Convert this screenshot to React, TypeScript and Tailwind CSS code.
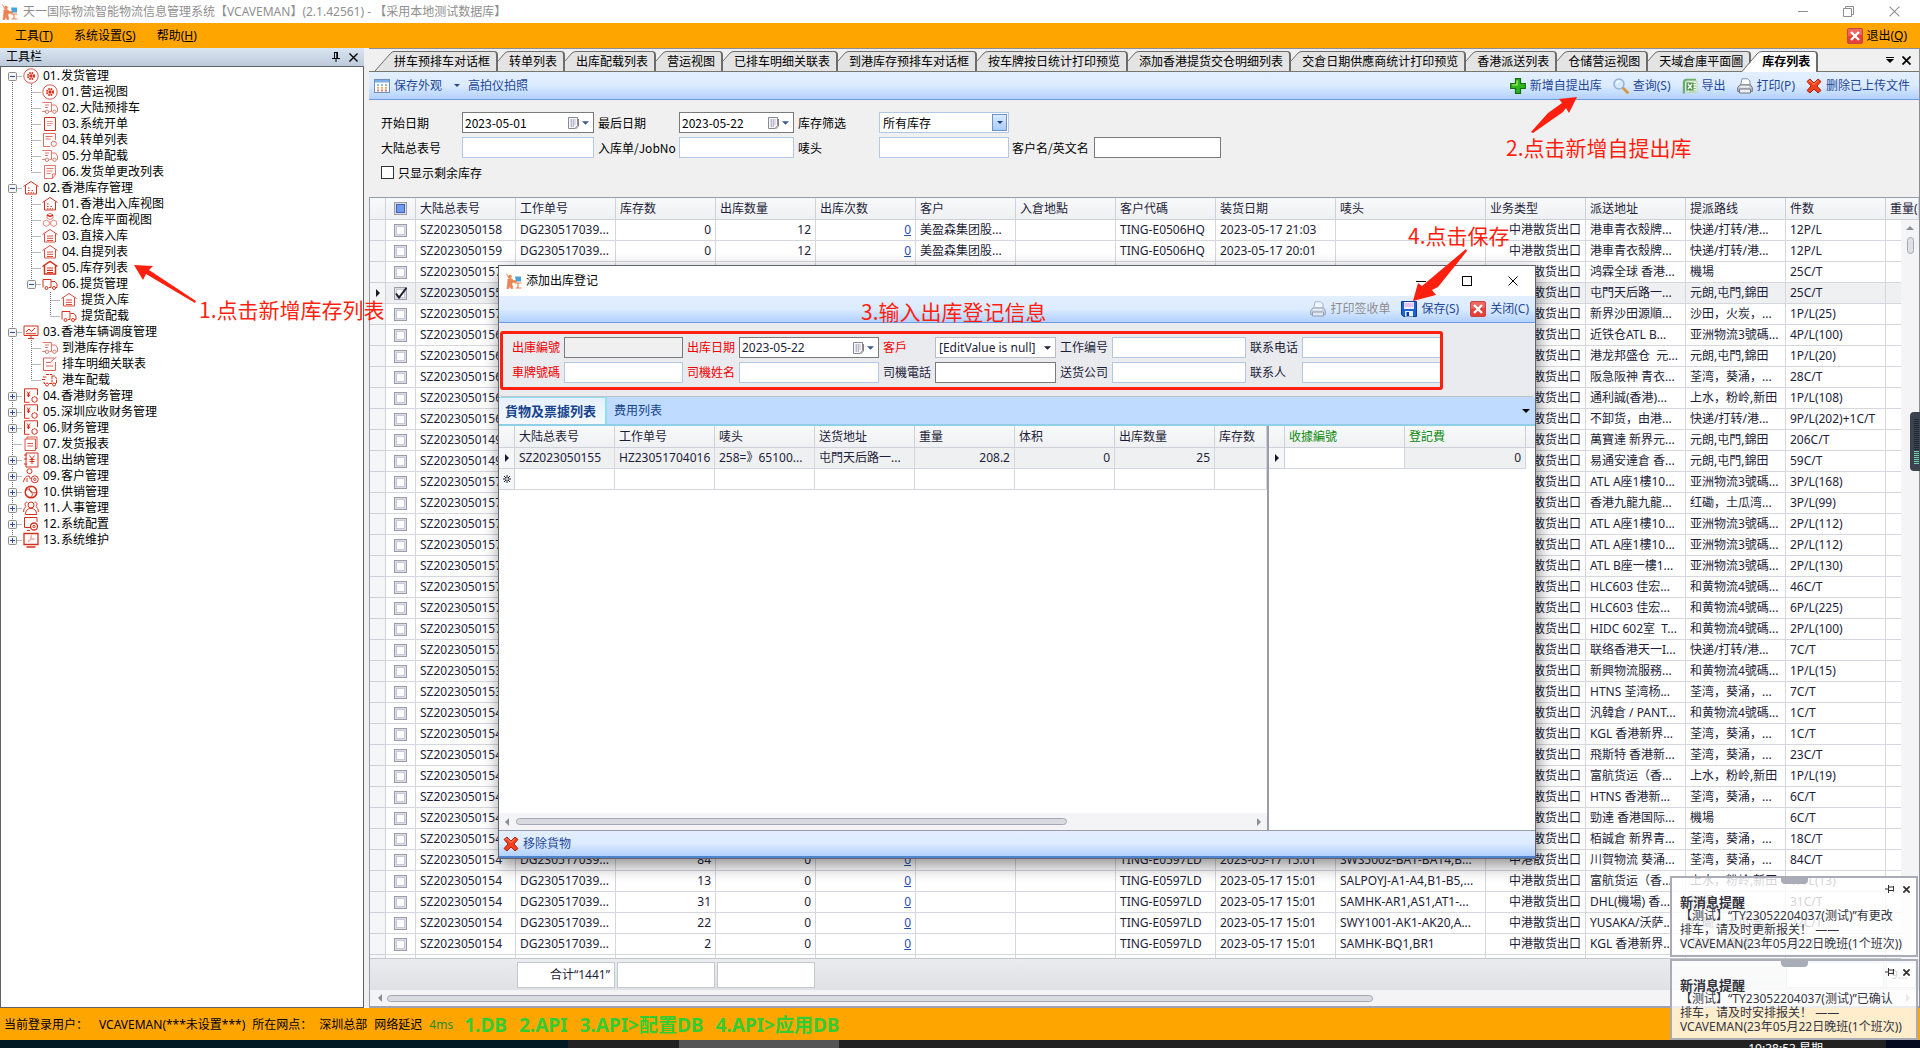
import React from "react";

type IconName =
  | "target" | "truck" | "truckRed" | "truckFast" | "doc" | "docClock" | "docEdit" | "house" | "boxes" | "houseList" | "houseBold"
  | "monitor" | "check" | "yen" | "report" | "ledger" | "person" | "swirl" | "group" | "gearScreen" | "wrench";

const TRUCK = (
  <>
    <path d="M.5 2.500h9v9h-2M3.500 11.500H.5zM9.500 5h4l2 3v3.500h-1M3 5h4M3 7.500h3" />
    <circle cx="5" cy="11.800" r="1.700" />
    <circle cx="12.500" cy="11.800" r="1.700" />
  </>
);
const HOUSE = <path d="M.5 6.500 8 1.500l7.500 5M2.500 5.500v8.500h11V5.500" />;
const YEN = <path d="M14.500 7V.8h-13v13.500h5M4 3.500l1.500 2 1.500-2M5.500 5.500V9M3.800 6h3.400M3.800 7.800h3.400" />;

const treeGlyphs: Record<IconName, React.ReactNode> = {
  target: (
    <>
      <circle cx="8" cy="8" r="7.200" strokeWidth=".8" />
      <circle cx="8" cy="8" r="3" strokeWidth="2" strokeDasharray="1.600 .8" />
      <circle cx="8" cy="8" r="1.200" fill="currentColor" />
    </>
  ),
  truck: <g opacity=".65">{TRUCK}</g>,
  truckRed: (
    <>
      <path d="M1 11.500V3.500h8v8H7M9.500 5.500H13l2 2.500v3.500h-1.500" />
      <circle cx="4.500" cy="12" r="1.500" />
      <circle cx="12" cy="12" r="1.500" />
    </>
  ),
  truckFast: (
    <>
      <path d="M4 2.500h6v9H7M1 5h4M0 7.500h4M10 4h3l1.500 3v4.500H13M3 11.500H2V10" strokeDasharray="3 .7" />
      <circle cx="5" cy="12.500" r="1.500" />
      <circle cx="12" cy="12.500" r="1.500" />
    </>
  ),
  doc: (
    <>
      <path d="M2.500 1.500h11v13h-11z" />
      <path d="M5 5.500h6M5 7.500h6M5 9.500h4" opacity=".5" />
    </>
  ),
  docClock: (
    <g opacity=".7">
      <path d="M8 14.500H1.500v-13h12V8M3.500 4.500h7M3.500 7h5" />
      <circle cx="11.800" cy="11.800" r="2.600" />
    </g>
  ),
  docEdit: <path d="M2.500 14.500v-13h11v9l-3 4zM4.500 4.500h7M4.500 7h6M4.500 9.500h4M10.500 14v-4h3" opacity=".65" />,
  house: (
    <>
      {HOUSE}
      <path d="M5 8h2M5 10.500h2M8.500 10.500h2M5 12.800h6" strokeDasharray="1.500 1" />
    </>
  ),
  boxes: (
    <>
      <path d="M8 1.200 11 3v3L8 7.700 5 6V3zM4.300 8l3 1.700v3l-3 1.800-3-1.800v-3zM11.700 8l3 1.700v3l-3 1.800-3-1.800v-3z" opacity=".6" />
      <path d="M5 3l3 1.500L11 3" strokeWidth="1.500" />
    </>
  ),
  houseList: (
    <g opacity=".85">
      {HOUSE}
      <path d="M5 8h6M5 10.300h6M5 12.500h6" />
    </g>
  ),
  houseBold: (
    <>
      <path d="M.5 6.500 8 1.500l7.500 5M2.500 5.500v8.500h11V5.500" strokeWidth="1.500" />
      <path d="M5 8h6M5 10.300h6M5 12.500h6" strokeWidth="1.200" />
    </>
  ),
  monitor: <path d="M1 2h14v9.500H1zM5 14.500h6M8 11.500v3M3 8l3-3 2.500 2.500L12 4M3 9.700h10" />,
  check: <path d="M12 2H1.500v12.500h12V6M4 6.500h5M4 10h7M9 5.500 14.500 1" opacity=".75" />,
  yen: (
    <>
      {YEN}
      <path d="M11.500 8.500l2.600 1.500v3l-2.600 1.500L9 13v-3z" />
    </>
  ),
  report: <path d="M4 3V1h10v11.500h-1.500M2 3h10.500v11.500H2zM4.500 7.500h5.500M4.500 10h5.500" opacity=".8" />,
  ledger: (
    <>
      <path d="M3 1h12v14H3zM6.500 3.500 9 7l2.500-3.500M9 7v5M6.500 7.500h5M6.500 9.500h5" />
      <path d="M1 3h3M1 7h3M1 12h3" />
    </>
  ),
  person: (
    <>
      <circle cx="6.500" cy="3.200" r="2.500" />
      <path d="M.5 14c1-5 3-6 5.500-6l1.500 3M4 10v4" />
      <circle cx="11.800" cy="11.300" r="3.500" />
      <circle cx="11.800" cy="11.300" r="1.200" />
    </>
  ),
  swirl: (
    <>
      <circle cx="8" cy="8" r="5.800" strokeWidth="1.500" />
      <path d="M2.500 7c2-3 4-2 5.500 0s4 2.500 5.500 1M8 2.500C5.500 4 6 6.500 8 8s2 4-1 5.500" />
    </>
  ),
  group: (
    <>
      <circle cx="8" cy="5" r="3" />
      <path d="M2.500 14.500c0-4 2-6 5.500-6s5.500 2 5.500 6zM4.500 2.200C2 1.500 1 5 3.200 6.500 1.500 7.500.7 9 .7 12M11.500 2.200c2.500-.7 3.500 2.800 1.300 4.300 1.700 1 2.500 2.500 2.500 5.500" />
    </>
  ),
  gearScreen: (
    <>
      <path d="M14 6V1.500H1.500v10H7M4 14.500h3" />
      <circle cx="11" cy="10.500" r="3.500" strokeWidth="1.300" />
      <circle cx="11" cy="10.500" r="1.200" />
    </>
  ),
  wrench: (
    <>
      <path d="M1 1.500h14v11H1zM3.500 15h9" strokeWidth="1.300" />
      <path d="M5 10l4-4M9 3.500a2 2 0 1 0 2.500 3" opacity=".4" strokeWidth="1.600" />
    </>
  ),
};

function TreeIcon({ name }: { name: IconName }) {
  return (
    <svg viewBox="0 0 16 16" className="h-4 w-4 shrink-0 text-[#d5301c]" fill="none" stroke="currentColor" strokeWidth="1" aria-hidden="true">
      {treeGlyphs[name]}
    </svg>
  );
}

type Rail = "" | "v" | "t" | "l" | "r";
interface TreeRow {
  rails: Rail[];
  sign?: "+" | "-";
  icon: IconName;
  num?: string;
  text: string;
}

const tree: TreeRow[] = [
  { rails: ["r"], sign: "-", icon: "target", num: "01.", text: "发货管理" },
  { rails: ["v", "t"], icon: "target", num: "01.", text: "营运视图" },
  { rails: ["v", "t"], icon: "truck", num: "02.", text: "大陆预排车" },
  { rails: ["v", "t"], icon: "doc", num: "03.", text: "系统开单" },
  { rails: ["v", "t"], icon: "docClock", num: "04.", text: "转单列表" },
  { rails: ["v", "t"], icon: "truck", num: "05.", text: "分单配载" },
  { rails: ["v", "l"], icon: "docEdit", num: "06.", text: "发货单更改列表" },
  { rails: ["t"], sign: "-", icon: "house", num: "02.", text: "香港库存管理" },
  { rails: ["v", "t"], icon: "house", num: "01.", text: "香港出入库视图" },
  { rails: ["v", "t"], icon: "boxes", num: "02.", text: "仓库平面视图" },
  { rails: ["v", "t"], icon: "houseList", num: "03.", text: "直接入库" },
  { rails: ["v", "t"], icon: "houseList", num: "04.", text: "自提列表" },
  { rails: ["v", "t"], icon: "houseBold", num: "05.", text: "库存列表" },
  { rails: ["v", "l"], sign: "-", icon: "truckRed", num: "06.", text: "提货管理" },
  { rails: ["v", "", "t"], icon: "houseList", text: "提货入库" },
  { rails: ["v", "", "l"], icon: "truckRed", text: "提货配载" },
  { rails: ["t"], sign: "-", icon: "monitor", num: "03.", text: "香港车辆调度管理" },
  { rails: ["v", "t"], icon: "truck", text: "到港库存排车" },
  { rails: ["v", "t"], icon: "check", text: "排车明细关联表" },
  { rails: ["v", "l"], icon: "truckFast", text: "港车配载" },
  { rails: ["t"], sign: "+", icon: "yen", num: "04.", text: "香港财务管理" },
  { rails: ["t"], sign: "+", icon: "yen", num: "05.", text: "深圳应收财务管理" },
  { rails: ["t"], sign: "+", icon: "yen", num: "06.", text: "财务管理" },
  { rails: ["t"], icon: "report", num: "07.", text: "发货报表" },
  { rails: ["t"], sign: "+", icon: "ledger", num: "08.", text: "出纳管理" },
  { rails: ["t"], sign: "+", icon: "person", num: "09.", text: "客户管理" },
  { rails: ["t"], sign: "+", icon: "swirl", num: "10.", text: "供销管理" },
  { rails: ["t"], sign: "+", icon: "group", num: "11.", text: "人事管理" },
  { rails: ["t"], sign: "+", icon: "gearScreen", num: "12.", text: "系统配置" },
  { rails: ["l"], sign: "+", icon: "wrench", num: "13.", text: "系统维护" },
];

const railPaths: Record<Rail, string> = {
  "": "",
  v: "M9.500 0V16",
  t: "M9.500 0V16M9.500 8.500H20",
  l: "M9.500 0V8M9.500 8.500H20",
  r: "M9.500 8V16M9.500 8.500H20",
};

function RailCell({ rail, sign }: { rail: Rail; sign?: "+" | "-" }) {
  return (
    <svg viewBox="0 0 19 16" className="h-4 w-[19px] shrink-0" fill="none" aria-hidden="true">
      <path d={railPaths[rail]} stroke="#707070" strokeDasharray="1 1" />
      {sign && (
        <>
          <rect x="5.500" y="4.500" width="8" height="8" rx="1" fill="#f4f4f4" stroke="#8c8c8c" />
          <path d={sign === "+" ? "M7 8.500h5M9.500 6v5" : "M7 8.500h5"} stroke="#2b4ca0" />
        </>
      )}
    </svg>
  );
}

function AppLogo() {
  return (
    <svg viewBox="0 0 16 16" className="h-4 w-4 shrink-0" aria-hidden="true">
      <circle cx="4" cy="3.500" r="1.700" fill="#ec8350" />
      <path d="M.5.5 2.500 5M2 6l3-.5 2.500 2 3 .3v1.400H6.500L5.800 11l1 4.500H5L3.800 12l-1 3.500H1L1.800 10z" fill="#ec8350" stroke="#ec8350" strokeWidth=".8" />
      <path d="M9 3.500h6v5h-5z" fill="#4aa3d8" />
      <path d="M8.500 10h7M12 10v4.500M9.500 15h6" stroke="#ec8350" strokeWidth="1.200" />
    </svg>
  );
}

function PlusIcon() {
  return (
    <svg viewBox="0 0 16 16" className="h-4 w-4 shrink-0" aria-hidden="true">
      <path d="M5.500.7h5v4.800h4.800v5h-4.800v4.800h-5v-4.800H.7v-5h4.800z" fill="#2fb51d" stroke="#13700a" strokeWidth="1.200" />
      <path d="M7 2.500v4.500H2.300" fill="none" stroke="#b8f06a" strokeWidth="1.200" />
    </svg>
  );
}
function SearchIcon() {
  return (
    <svg viewBox="0 0 16 16" className="h-4 w-4 shrink-0" aria-hidden="true">
      <path d="M10 10l4.500 4.500" stroke="#d99a3a" strokeWidth="2.800" strokeLinecap="round" />
      <circle cx="6" cy="6" r="5" fill="#d3eafc" stroke="#9ab2d4" strokeWidth="1.500" />
      <path d="M3.500 5.500a3 3 0 0 1 3-2.300" stroke="#fff" strokeWidth="1.400" fill="none" />
    </svg>
  );
}
function ExcelIcon() {
  return (
    <svg viewBox="0 0 16 16" className="h-4 w-4 shrink-0" aria-hidden="true">
      <path d="M5 3h10v11.500H5z" fill="#f4faf2" stroke="#b9d4b2" />
      <path d="M11 5.500h3M11 8h3M11 10.500h3M7 13h7" stroke="#8fbf85" />
      <path d="M.8 15.500V4.500C.8 2 2 .8 4.500.8H14v1.700H5.500C4 2.500 3 3.500 3 5v10.500z" fill="#6fae63" />
      <path d="M4.500 4.500h7v8h-7z" fill="#4b9642" />
      <path d="M6 6l4 5M10 6l-4 5" stroke="#fff" strokeWidth="1.400" />
    </svg>
  );
}
function PrinterIcon({ faded }: { faded?: boolean }) {
  return (
    <svg viewBox="0 0 16 16" className={faded ? "h-4 w-4 shrink-0 opacity-60" : "h-4 w-4 shrink-0"} aria-hidden="true">
      <path d="M3.500 8 5 .8h5.500L13 3v5" fill="#fff" stroke="#7d93ad" />
      <path d="M.7 9.500 3 6.800h10.500l1.800 2.700v4H.7z" fill="#c3c8d0" stroke="#70757f" />
      <path d="M2.500 11h11v4h-11z" fill="#eceff3" stroke="#70757f" />
      <path d="M3 8.800h9" stroke="#fff" strokeWidth="1.200" />
    </svg>
  );
}
function CrossIcon() {
  return (
    <svg viewBox="0 0 16 16" className="h-4 w-4 shrink-0" aria-hidden="true">
      <path d="M1 3.500 4 1l4 4 4-4 3 2.500L11 8l4 4.500L12 15l-4-4-4 4-3-2.500L5 8z" fill="#f4401a" stroke="#a31b08" strokeWidth=".9" />
      <path d="M2.500 3.700 4 2.500l4 4 4-4" fill="none" stroke="#ffa070" strokeWidth=".9" />
    </svg>
  );
}
function ExitIcon() {
  return (
    <svg viewBox="0 0 16 16" className="h-4 w-4 shrink-0" aria-hidden="true">
      <rect x=".5" y=".5" width="15" height="15" rx="1.500" fill="#e5403a" stroke="#c9453f" />
      <path d="M1 1h14v6q-7-1-14 1z" fill="#f0837c" opacity=".6" />
      <path d="M4 4l8 8M12 4l-8 8" stroke="#fff" strokeWidth="2.400" />
    </svg>
  );
}
function SaveIcon() {
  return (
    <svg viewBox="0 0 16 16" className="h-4 w-4 shrink-0" aria-hidden="true">
      <path d="M.5.5h15v15h-13l-2-2z" fill="#1b63d0" stroke="#0e3f95" />
      <rect x="3" y="1" width="10" height="7" fill="#f5ecff" />
      <path d="M3.500 3h9M3.500 5h9" stroke="#c99be8" />
      <rect x="4" y="10" width="8" height="5.500" fill="#e8eef8" />
      <rect x="5.500" y="11" width="2.500" height="4" fill="#0e3f95" />
    </svg>
  );
}
function LayoutIcon() {
  return (
    <svg viewBox="0 0 16 14" className="h-[14px] w-4 shrink-0" aria-hidden="true">
      <rect x=".5" y=".5" width="15" height="13" fill="#fff" stroke="#6a8fc0" />
      <rect x="1" y="1" width="14" height="2.500" fill="#7eaee6" />
      <path d="M3 6h10" stroke="#8fbfe8" strokeWidth="2" strokeDasharray="2 2" />
      <path d="M3 8.800h10" stroke="#f0b060" strokeWidth="2" strokeDasharray="2 2" />
      <path d="M3 11.500h10" stroke="#e07a6a" strokeWidth="2" strokeDasharray="2 2" />
    </svg>
  );
}
function Caret({ className }: { className: string }) {
  return (
    <svg viewBox="0 0 8 4" className={className} aria-hidden="true">
      <path d="M0 0h8L4 4z" fill="currentColor" />
    </svg>
  );
}
function Pointer() {
  return (
    <svg viewBox="0 0 4 8" className="mx-auto h-2 w-1" aria-hidden="true">
      <path d="M0 0l4 4-4 4z" fill="#1a1a2a" />
    </svg>
  );
}
function PickerIcon() {
  return (
    <span className="flex items-center gap-[3px] pr-1">
      <svg viewBox="0 0 11 12" className="h-3 w-[11px]" aria-hidden="true">
        <path d="M.5.5h9v8l-2.500 3H.5z" fill="#f6f6fa" stroke="#8a8a96" />
        <path d="M2 3h6M2 5h6M2 7h6M2 9h4M3.500 2v8M5.500 2v8" stroke="#a9adc2" strokeWidth=".7" />
        <path d="M10.500 2v7l-3 3" stroke="#8f7f78" fill="none" />
      </svg>
      <Caret className="h-1 w-[7px] text-[#3c5a8c]" />
    </span>
  );
}

const tabs = [
  "转单列表", "出库配载列表", "营运视图", "已排车明细关联表", "到港库存预排车对话框", "按车牌按日统计打印预览",
  "添加香港提货交仓明细列表", "交倉日期供應商统计打印预览", "香港派送列表", "仓储营运视图", "天域倉庫平面圖",
];

function TabStrip() {
  return (
    <div className="flex h-[23px] shrink-0 items-end border-b border-[#76766e] bg-[#f0f0f0] pl-[6px] leading-[20px]" role="tablist">
      <button role="tab" className="flex h-5 shrink-0">
        <svg viewBox="0 0 19 20" className="h-5 w-[19px]" aria-hidden="true">
          <path d="M0 20 15 3q3-3 4-2.500V20z" fill="#e4e4e4" />
          <path d="M0 20 15 3q2-2.500 4-2.500" fill="none" stroke="#6c6c6c" />
        </svg>
        <span className="h-5 rounded-tr-sm border-t border-r-2 border-[#6c6c6c] bg-[#e4e4e4] pr-[6px]">拼车预排车对话框</span>
      </button>
      {tabs.map((t) => (
        <button key={t} role="tab" className="flex h-5 shrink-0">
          <svg viewBox="0 0 11 20" className="h-5 w-[11px]" aria-hidden="true">
            <path d="M0 10 7 2q2-2 4-1.500V20H0z" fill="#e4e4e4" />
            <path d="M0 10 7 2q2-1.500 4-1.500" fill="none" stroke="#6c6c6c" />
          </svg>
          <span className="h-5 rounded-tr-sm border-t border-r-2 border-[#6c6c6c] bg-[#e4e4e4] pr-[6px]">{t}</span>
        </button>
      ))}
      <button role="tab" aria-selected="true" className="-mb-px -ml-[9px] flex h-[21px] shrink-0 font-bold">
        <svg viewBox="0 0 20 21" className="h-[21px] w-5" aria-hidden="true">
          <path d="M0 21 16 3q2-3 4-2.500V21z" fill="#fff" />
          <path d="M0 20.500 15 3q2-2.500 5-2.500" fill="none" stroke="#6c6c6c" />
        </svg>
        <span className="h-[21px] rounded-tr-sm border-t border-r-2 border-[#6c6c6c] bg-white pr-[6px]">库存列表</span>
      </button>
      <div className="ml-auto flex items-center gap-2 self-center pr-2">
        <button aria-label="标签列表" className="flex flex-col items-center gap-px">
          <span className="h-px w-2 bg-black" />
          <Caret className="h-1 w-2 text-black" />
        </button>
        <button aria-label="关闭标签">
          <CloseGlyph className="h-[9px] w-[9px] text-black" width={2} />
        </button>
      </div>
    </div>
  );
}

function CloseGlyph({ className, width }: { className: string; width: number }) {
  return (
    <svg viewBox="0 0 10 10" className={className} fill="none" stroke="currentColor" strokeWidth={width} aria-hidden="true">
      <path d="M.5.5l9 9M9.500.5l-9 9" />
    </svg>
  );
}

const barGradient = "bg-linear-to-b from-[#e3efff] via-[#dcebff] to-[#b1d1ff]";

function ToolButton({ icon, text, disabled }: { icon: React.ReactNode; text: string; disabled?: boolean }) {
  return (
    <button disabled={disabled} className={disabled ? "flex items-center gap-1 text-[#8d8d8d]" : "flex items-center gap-1 text-[#1e4896]"}>
      {icon}
      <span>{text}</span>
    </button>
  );
}

const PLAIN = "h-[21px] min-w-0 border border-[#b3c8e3] bg-white px-1";
const DARK = "h-[21px] min-w-0 border border-[#7a7a7a] bg-white px-1";

function DateBox({ id, value }: { id: string; value: string }) {
  return (
    <div className="mr-[4px] flex h-[21px] items-center border border-[#7a7a7a] bg-white">
      <input id={id} defaultValue={value} className="w-full min-w-0 pl-[2px] outline-none" />
      <button type="button" aria-label="选择日期"><PickerIcon /></button>
    </div>
  );
}

function Filters() {
  return (
    <form className="h-[97px] shrink-0 bg-[#f0f0f0] pt-3 pl-[12px] font-['Noto_Sans_CJK_SC',sans-serif]">
      <div className="grid grid-cols-[81px_136px_81px_119px_81px_133px_82px_127px] items-center gap-y-1">
        <label htmlFor="d1">开始日期</label>
        <DateBox id="d1" value="2023-05-01" />
        <label htmlFor="d2">最后日期</label>
        <DateBox id="d2" value="2023-05-22" />
        <label htmlFor="s1">库存筛选</label>
        <div className="mr-[3px] flex h-[21px] items-center border border-[#b3c8e3] bg-white pr-px">
          <select id="s1" className="w-full appearance-none pl-[3px] outline-none"><option>所有库存</option></select>
          <span className="flex h-[17px] w-[15px] shrink-0 items-center justify-center border border-[#6f93c8] bg-linear-to-b from-[#dcebff] to-[#a9cbfb]">
            <Caret className="h-[3px] w-[6px] text-[#15428b]" />
          </span>
        </div>
        <span />
        <span />
        <label htmlFor="f1">大陆总表号</label>
        <input id="f1" className={`${PLAIN} mr-[4px]`} />
        <label htmlFor="f2">入库单/JobNo</label>
        <input id="f2" className={`${PLAIN} mr-[4px]`} />
        <label htmlFor="f3">唛头</label>
        <input id="f3" className={`${PLAIN} mr-[3px]`} />
        <label htmlFor="f4">客户名/英文名</label>
        <input id="f4" className={DARK} />
      </div>
      <label className="mt-1 flex h-[21px] items-center gap-1">
        <input type="checkbox" className="h-[13px] w-[13px] appearance-none border border-[#333] bg-white" />
        只显示剩余库存
      </label>
    </form>
  );
}

function Tick({ checked, mixed, label }: { checked?: boolean; mixed?: boolean; label: string }) {
  return (
    <span className="mx-auto grid h-[13px] w-[13px]">
      <input
        type="checkbox"
        aria-label={label}
        defaultChecked={checked}
        className="col-start-1 row-start-1 h-[13px] w-[13px] appearance-none border border-[#9a9cab] bg-[#dcdee6]"
      />
      {mixed ? (
        <span className="pointer-events-none col-start-1 row-start-1 m-[2px] border border-[#3f62b5] bg-[#6f9bec]" />
      ) : (
        <span className="pointer-events-none col-start-1 row-start-1 m-[2px] border border-[#c6cad8] bg-white" />
      )}
      {checked && (
        <svg viewBox="0 0 13 13" className="pointer-events-none col-start-1 row-start-1 h-[13px] w-[13px]" aria-hidden="true">
          <path d="M2 6.500 5 10.500 12.500.8" fill="none" stroke="#1f1f30" strokeWidth="2" />
        </svg>
      )}
    </span>
  );
}

const HK = "亚洲物流3號碼...";
const HW = "和黄物流4號碼...";
const YL = "元朗,屯門,錦田";
const TW = "荃湾，葵涌，...";
const KD = "快递/打转/港...";
const SS = "上水，粉岭,新田";

const places: [string, string, string, string][] = [
  ["SZ2023050158", "港車青衣殼牌...", KD, "12P/L"],
  ["SZ2023050159", "港車青衣殼牌...", KD, "12P/L"],
  ["SZ2023050157", "鸿霖全球 香港...", "機場", "25C/T"],
  ["SZ2023050155", "屯門天后路一...", YL, "25C/T"],
  ["SZ2023050157", "新界沙田源順...", "沙田，火炭，...", "1P/L(25)"],
  ["SZ2023050156", "近铁仓ATL B...", HK, "4P/L(100)"],
  ["SZ2023050156", "港龙邦盛仓  元...", YL, "1P/L(20)"],
  ["SZ2023050156", "阪急阪神 青衣...", TW, "28C/T"],
  ["SZ2023050156", "通利誠(香港)...", SS, "1P/L(108)"],
  ["SZ2023050156", "不卸货，由港...", KD, "9P/L(202)+1C/T"],
  ["SZ2023050149", "萬寶達 新界元...", YL, "206C/T"],
  ["SZ2023050149", "易通安達倉 香...", YL, "59C/T"],
  ["SZ2023050157", "ATL A座1樓10...", HK, "3P/L(168)"],
  ["SZ2023050157", "香港九龍九龍...", "红磡，土瓜湾...", "3P/L(99)"],
  ["SZ2023050157", "ATL A座1樓10...", HK, "2P/L(112)"],
  ["SZ2023050157", "ATL A座1樓10...", HK, "2P/L(112)"],
  ["SZ2023050157", "ATL B座一樓1...", HK, "2P/L(130)"],
  ["SZ2023050157", "HLC603 佳宏...", HW, "46C/T"],
  ["SZ2023050157", "HLC603 佳宏...", HW, "6P/L(225)"],
  ["SZ2023050157", "HIDC 602室  T...", HW, "2P/L(100)"],
  ["SZ2023050157", "联络香港天一I...", KD, "7C/T"],
  ["SZ2023050153", "新興物流服務...", HW, "1P/L(15)"],
  ["SZ2023050153", "HTNS 荃湾杨...", TW, "7C/T"],
  ["SZ2023050154", "汎韓倉 / PANT...", HW, "1C/T"],
  ["SZ2023050154", "KGL 香港新界...", TW, "1C/T"],
  ["SZ2023050154", "飛斯特 香港新...", TW, "23C/T"],
  ["SZ2023050154", "富航货运（香...", SS, "1P/L(19)"],
  ["SZ2023050154", "HTNS 香港新...", TW, "6C/T"],
  ["SZ2023050154", "勁達 香港国际...", "機場", "6C/T"],
  ["SZ2023050154", "栢誠倉 新界青...", TW, "18C/T"],
  ["SZ2023050154", "川賀物流 葵涌...", TW, "84C/T"],
  ["SZ2023050154", "富航货运（香...", SS, "1P/L(13)"],
  ["SZ2023050154", "DHL(機場) 香...", "機場", "31C/T"],
  ["SZ2023050154", "YUSAKA/沃萨...", "红磡，土瓜湾...", "22C/T"],
  ["SZ2023050154", "KGL 香港新界...", TW, "2C/T"],
];

const marks: Record<number, [string, string]> = {
  30: ["84", "SWS5002-BA1-BA14,B..."],
  31: ["13", "SALPOYJ-A1-A4,B1-B5,..."],
  32: ["31", "SAMHK-AR1,AS1,AT1-..."],
  33: ["22", "SWY1001-AK1-AK20,A..."],
  34: ["2", "SAMHK-BQ1,BR1"],
};

const TH = "h-[22px] overflow-hidden border-r border-b border-[#cfd1d9] px-[4px] text-left font-normal";
const TD = "h-[21px] overflow-hidden border-r border-b border-[#d5d6de] px-[4px]";
const IND = "h-[21px] border-r border-b border-[#cfd1d9] bg-[#f4f6f8]";

function MainGrid() {
  const heads = ["大陆总表号", "工作单号", "库存数", "出库数量", "出库次数", "客户", "入倉地點", "客户代碼", "装货日期", "唛头", "业务类型", "派送地址", "提派路线", "件数", "重量("];
  return (
    <div className="relative flex min-h-0 flex-1 flex-col overflow-hidden border-t border-l border-[#9a9caa] bg-white text-[#1d1d38]">
      <table className="w-full table-fixed border-separate border-spacing-0 whitespace-pre leading-[20px]">
        <colgroup>
          <col className="w-4" />
          <col className="w-[30px]" />
          {heads.map((h, i) => (
            <col key={h} className={i === 8 ? "w-[120px]" : i === 9 ? "w-[150px]" : i === 14 ? "" : "w-[100px]"} />
          ))}
        </colgroup>
        <thead>
          <tr className="bg-linear-to-b from-[#f8f9fa] to-[#eff0f3]">
            <th className={TH} />
            <th className={TH}><Tick mixed label="全选" /></th>
            {heads.map((h) => <th key={h} className={TH}>{h}</th>)}
          </tr>
        </thead>
        <tbody>
          {places.map(([no, addr, route, pcs], i) => {
            const top = i < 2;
            const m = marks[i];
            return (
              <tr key={i} className={i === 3 ? "bg-[#eef0f2]" : ""}>
                <td className={IND}>{i === 3 && <Pointer />}</td>
                <td className={TD}><Tick checked={i === 3} label={no} /></td>
                <td className={TD}>{no}</td>
                <td className={TD}>DG230517039...</td>
                <td className={`${TD} text-right`}>{m ? m[0] : "0"}</td>
                <td className={`${TD} text-right`}>{top ? "12" : "0"}</td>
                <td className={`${TD} text-right`}><a href="#detail" className="text-[#1f4fb0] underline">0</a></td>
                <td className={TD}>{top ? "美盈森集团股..." : ""}</td>
                <td className={TD} />
                <td className={TD}>{top ? "TING-E0506HQ" : "TING-E0597LD"}</td>
                <td className={TD}>{i === 0 ? "2023-05-17 21:03" : i === 1 ? "2023-05-17 20:01" : "2023-05-17 15:01"}</td>
                <td className={TD}>{m ? m[1] : ""}</td>
                <td className={`${TD} text-right`}>中港散货出口</td>
                <td className={TD}>{addr}</td>
                <td className={TD}>{route}</td>
                <td className={TD}>{pcs}</td>
                <td className={TD} />
              </tr>
            );
          })}
          <tr>
            <td className={IND} />
            <td className={TD}><Tick label="行" /></td>
            {heads.map((h) => <td key={h} className={TD} />)}
          </tr>
        </tbody>
      </table>
      <div className="absolute inset-x-0 bottom-0 bg-[#f4f4f7]">
        <div className="flex h-8 items-center gap-[2px] border-t border-[#c5c7d0] bg-linear-to-b from-[#eaebee] to-[#e0e1e5] pl-[147px]">
          <span className="h-[26px] w-[98px] border border-[#c5c7d0] bg-white pr-1 text-right leading-6">合计“1441”</span>
          <span className="h-[26px] w-[98px] border border-[#c5c7d0] bg-white" />
          <span className="h-[26px] w-[98px] border border-[#c5c7d0] bg-white" />
          <span className="ml-auto h-[26px] w-[98px] border border-[#c5c7d0] bg-white" />
          <span className="mr-[3px] h-[26px] w-[30px] border border-[#c5c7d0] bg-white pl-1 leading-6">9...</span>
        </div>
        <div className="flex h-[18px] items-center gap-1 border-b-2 border-[#a0a2ae] pl-2">
          <svg viewBox="0 0 4 8" className="h-2 w-1" aria-hidden="true"><path d="M4 0 0 4l4 4z" fill="#8a8c99" /></svg>
          <span className="ml-px h-[7px] w-[64%] rounded-full border border-[#a5a7b3] bg-[#d9dae0]" />
          <svg viewBox="0 0 4 8" className="mr-[9px] ml-auto h-2 w-1" aria-hidden="true"><path d="M0 0l4 4-4 4z" fill="#8a8c99" /></svg>
        </div>
      </div>
      <div className="absolute top-[22px] right-0 bottom-12 flex w-[18px] flex-col items-center bg-[#f4f4f7] pt-[6px]">
        <svg viewBox="0 0 8 4" className="h-1 w-2" aria-hidden="true"><path d="M0 4 4 0l4 4z" fill="#8a8c99" /></svg>
        <span className="mt-[7px] h-[17px] w-[7px] rounded-full border border-[#a5a7b3] bg-[#dfe0e6]" />
      </div>
    </div>
  );
}

function DialogWindow() {
  const cols = ["大陆总表号", "工作单号", "唛头", "送货地址", "重量", "体积", "出库数量", "库存数"];
  const vals = ["SZ2023050155", "HZ23051704016", "258=》65100...", "屯門天后路一...", "208.2", "0", "25", ""];
  return (
    <section
      role="dialog"
      aria-label="添加出库登记"
      className="absolute top-[265px] left-[498px] flex h-[594px] w-[1038px] flex-col border border-[#5f6470] bg-white text-[#1d1d38] shadow-[2px_6px_16px_rgba(0,0,0,0.45)]"
    >
      <header className="flex h-[30px] shrink-0 items-center gap-1 pl-[7px] text-black">
        <AppLogo />
        <h2>添加出库登记</h2>
        <div className="ml-auto flex items-center gap-9 pr-[17px]">
          <button aria-label="最小化" className="h-px w-[10px] bg-black" />
          <button aria-label="最大化" className="h-[10px] w-[10px] border border-black" />
          <button aria-label="关闭"><CloseGlyph className="h-[10px] w-[10px]" width={1} /></button>
        </div>
      </header>
      <div className={`flex h-[27px] shrink-0 items-center justify-end gap-[11px] border-b border-[#6f9bdc] pr-[6px] ${barGradient}`}>
        <ToolButton icon={<PrinterIcon faded />} text="打印签收单" disabled />
        <ToolButton icon={<SaveIcon />} text="保存(S)" />
        <ToolButton icon={<ExitIcon />} text="关闭(C)" />
      </div>
      <form className="h-[74px] shrink-0 rounded-sm border-b border-[#c0c2cb] bg-[#eaebef] pt-[8px]">
        <div className="ml-px h-[59px] w-[943px] overflow-hidden rounded-[3px] border-3 border-[#ff1f0e] pt-[3px] pl-[9px]">
          <div className="grid grid-cols-[52px_123px_52px_144px_52px_125px_52px_138px_52px_141px] items-center gap-y-1 [&_label]:whitespace-nowrap">
            <label htmlFor="g1" className="text-[#f00000]">出庫編號</label>
            <input id="g1" className="mr-[4px] h-[21px] min-w-0 border border-[#7a7a7a] bg-[#f0f0f0]" />
            <label htmlFor="g2" className="text-[#f00000]">出库日期</label>
            <DateBox id="g2" value="2023-05-22" />
            <label htmlFor="g3" className="text-[#f00000]">客戶</label>
            <div className="mr-[4px] flex h-[21px] items-center border border-[#b9bcc8] bg-white pr-1">
              <select id="g3" className="w-full min-w-0 appearance-none pl-[3px] outline-none"><option>[EditValue is null]</option></select>
              <Caret className="h-1 w-[7px] shrink-0 text-[#1d1d38]" />
            </div>
            <label htmlFor="g4">工作编号</label>
            <input id="g4" className={`${PLAIN} mr-[4px]`} />
            <label htmlFor="g5">联系电话</label>
            <input id="g5" className={PLAIN} />
            <label htmlFor="g6" className="text-[#f00000]">車牌號碼</label>
            <input id="g6" className={`${PLAIN} mr-[4px]`} />
            <label htmlFor="g7" className="text-[#f00000]">司機姓名</label>
            <input id="g7" className={`${PLAIN} mr-[4px]`} />
            <label htmlFor="g8">司機電話</label>
            <input id="g8" className={`${DARK} mr-[4px]`} />
            <label htmlFor="g9">送货公司</label>
            <input id="g9" className={`${PLAIN} mr-[4px]`} />
            <label htmlFor="g10">联系人</label>
            <input id="g10" className={PLAIN} />
          </div>
        </div>
      </form>
      <div className="flex h-[29px] shrink-0 items-stretch border-b-2 border-[#8fd0e8] bg-[#bfdbff] text-[#15428b]" role="tablist">
        <button role="tab" aria-selected="true" className="border-t border-r-2 border-[#8fe0ee] bg-linear-to-b from-[#e6f1ff] to-[#f4f8fd] px-[6px] pr-[9px] text-[13px] font-bold">
          貨物及票據列表
        </button>
        <button role="tab" className="px-[7px]">费用列表</button>
        <button aria-label="更多" className="ml-auto pr-[5px] text-black"><Caret className="h-1 w-2" /></button>
      </div>
      <div className="flex min-h-0 flex-1">
        <div className="flex w-[768px] shrink-0 flex-col overflow-hidden">
          <table className="w-full table-fixed border-separate border-spacing-0 whitespace-nowrap leading-[20px]">
            <colgroup>
              <col className="w-4" />
              {cols.map((c, i) => <col key={c} className={i === 7 ? "" : "w-[100px]"} />)}
            </colgroup>
            <thead>
              <tr className="bg-linear-to-b from-[#f8f9fa] to-[#eff0f3]">
                <th className={TH} />
                {cols.map((c) => <th key={c} className={TH}>{c}</th>)}
              </tr>
            </thead>
            <tbody>
              <tr>
                <td className={IND}><Pointer /></td>
                {vals.map((v, i) => <td key={i} className={`${TD} bg-[#eef0f2] ${i > 3 ? "text-right" : ""}`}>{v}</td>)}
              </tr>
              <tr>
                <td className={`${IND} text-center`}>
                  <svg viewBox="0 0 8 8" className="mx-auto h-2 w-2" aria-hidden="true">
                    <path d="M4 0v8M0 4h8M1 1l6 6M7 1 1 7" stroke="#1a1a2a" />
                    <circle cx="4" cy="4" r="1" fill="#fff" />
                  </svg>
                </td>
                {vals.map((_, i) => <td key={i} className={TD} />)}
              </tr>
            </tbody>
          </table>
          <div className="mt-auto flex h-[17px] items-center bg-[#f4f4f7] pr-[6px] pl-[6px]">
            <svg viewBox="0 0 4 8" className="h-2 w-1" aria-hidden="true"><path d="M4 0 0 4l4 4z" fill="#8a8c99" /></svg>
            <span className="ml-[7px] h-[7px] w-[551px] rounded-full border border-[#a5a7b3] bg-[#d9dae0]" />
            <svg viewBox="0 0 4 8" className="ml-auto h-2 w-1" aria-hidden="true"><path d="M0 0l4 4-4 4z" fill="#8a8c99" /></svg>
          </div>
        </div>
        <div className="min-w-0 flex-1 border-l-2 border-[#9a9caa]">
          <table className="w-full table-fixed border-separate border-spacing-0 leading-[20px]">
            <colgroup>
              <col className="w-[16px]" />
              <col className="w-[120px]" />
              <col className="w-[121px]" />
              <col />
            </colgroup>
            <thead>
              <tr className="bg-linear-to-b from-[#f8f9fa] to-[#eff0f3] text-[#0a8a0a]">
                <th className={TH} />
                <th className={TH}>收據編號</th>
                <th className={TH}>登記費</th>
                <th className="border-b border-[#cfd1d9]" />
              </tr>
            </thead>
            <tbody>
              <tr>
                <td className={IND}><Pointer /></td>
                <td className={TD} />
                <td className={`${TD} bg-[#eef0f2] text-right`}>0</td>
                <td />
              </tr>
            </tbody>
          </table>
        </div>
      </div>
      <div className={`flex h-[28px] shrink-0 items-center border-t border-b-2 border-t-[#9a9caa] border-b-[#4f83cc] pl-[4px] ${barGradient}`}>
        <ToolButton icon={<CrossIcon />} text="移除貨物" />
      </div>
    </section>
  );
}

function Notice({ verb, place }: { verb: string; place: string }) {
  return (
    <aside className="flex h-[81px] flex-col border-2 border-[#a9acb6] bg-white/80 text-[#33343f]">
      <div className="mx-auto h-[6px] w-[27px] shrink-0 rounded-b bg-[#a9adb8]" />
      <div className="flex h-[10px] shrink-0 items-center justify-end gap-[9px] pr-[6px]">
        <button aria-label="固定">
          <svg viewBox="0 0 9 8" className="h-2 w-[9px]" fill="none" stroke="#333" aria-hidden="true"><path d="M0 4h3M3.500 0v8M3.500 2h5v3.500h-5M8.500 1v5.500" /></svg>
        </button>
        <button aria-label="关闭"><CloseGlyph className="h-[7px] w-[7px] text-[#333]" width={2.5} /></button>
      </div>
      <div className="mt-px pl-2 leading-[14px] whitespace-nowrap">
        <p className="text-[13px] font-bold">新消息提醒</p>
        <p>【测试】“TY23052204037(测试)”{verb}</p>
        <p>排车，请及时{place}报关！ ——</p>
        <p>VCAVEMAN(23年05月22日晚班(1个班次))</p>
      </div>
    </aside>
  );
}

const NOTE = "pointer-events-none absolute text-[21px] leading-[28px] whitespace-nowrap text-[#ff1f0e] font-['Noto_Sans_CJK_SC',sans-serif]";

function Annotations() {
  return (
    <>
      <span className={`${NOTE} top-[295px] left-[199px]`}>1.点击新增库存列表</span>
      <span className={`${NOTE} top-[133px] left-[1506px]`}>2.点击新增自提出库</span>
      <span className={`${NOTE} top-[297px] left-[861px]`}>3.输入出库登记信息</span>
      <span className={`${NOTE} top-[221px] left-[1408px]`}>4.点击保存</span>
      <svg viewBox="0 0 63 38" className="pointer-events-none absolute top-[265px] left-[134px] h-[38px] w-[63px]" aria-hidden="true">
        <path d="M0 0 19 1 15 5 62 36 61 38 12 9 9 15z" fill="#ff1f0e" />
      </svg>
      <svg viewBox="0 0 47 37" className="pointer-events-none absolute top-[97px] left-[1531px] h-[37px] w-[47px]" aria-hidden="true">
        <path d="M46 0 28 2 31 6 17 16 0 35 2 36 32 15 35 11 38 16z" fill="#ff1f0e" />
      </svg>
      <svg viewBox="0 0 55 53" className="pointer-events-none absolute top-[249px] left-[1413px] h-[53px] w-[55px]" aria-hidden="true">
        <path d="M0 52 5 34 9 37 53 0 54 2 25 38 19 41 23 46z" fill="#ff1f0e" />
      </svg>
    </>
  );
}

export default function App() {
  return (
    <div className="relative flex h-screen flex-col overflow-hidden bg-[#f0f0f0] font-['Noto_Sans','Noto_Sans_CJK_SC',sans-serif] text-[12px] leading-4 text-black">
      <header className="flex h-[23px] shrink-0 items-center gap-[5px] bg-white pl-[2px] text-[#8f8f8f]">
        <AppLogo />
        <h1 className="whitespace-nowrap">天一国际物流智能物流信息管理系统【VCAVEMAN】(2.1.42561) -  【采用本地测试数据库】</h1>
        <div className="ml-auto flex items-center gap-[35px] pr-5">
          <button aria-label="最小化" className="h-px w-[10px] bg-[#8f8f8f]" />
          <button aria-label="还原">
            <svg viewBox="0 0 11 11" className="h-[11px] w-[11px]" fill="none" stroke="currentColor" aria-hidden="true"><path d="M.5 2.500h8v8h-8zM2.500 2.500v-2h8v8h-2" /></svg>
          </button>
          <button aria-label="关闭"><CloseGlyph className="h-[11px] w-[11px]" width={1} /></button>
        </div>
      </header>

      <nav className="flex h-[25px] shrink-0 items-center gap-[21px] bg-[#ffa500] pr-[13px] pl-[15px]">
        <button>工具(<u>T</u>)</button>
        <button>系统设置(<u>S</u>)</button>
        <button>帮助(<u>H</u>)</button>
        <button className="ml-auto flex items-center gap-[3px]">
          <ExitIcon />
          <span>退出(<u>Q</u>)</span>
        </button>
      </nav>

      <div className="flex min-h-0 flex-1">
        <aside className="flex w-[364px] shrink-0 flex-col">
          <div className="flex h-[18px] shrink-0 items-center bg-linear-to-b from-[#dbe6f1] to-[#bccadb] pr-[6px] pl-[6px]">
            <h2 className="leading-[18px]">工具栏</h2>
            <button aria-label="固定" className="ml-auto">
              <svg viewBox="0 0 8 10" className="h-[10px] w-2" fill="none" stroke="#000" aria-hidden="true"><path d="M2.500 0v6M2 .5h4M5.500 0v6M4.800 0v6M0 6.500h8M4 6.500V10" /></svg>
            </button>
            <button aria-label="关闭" className="ml-[9px]"><CloseGlyph className="h-[9px] w-[9px]" width={1.5} /></button>
          </div>
          <ul className="flex-1 overflow-hidden border border-[#5f6368] bg-white pt-px pl-[2px]">
            {tree.map((n, i) => (
              <li key={i} className="flex h-4 items-center">
                {n.rails.map((r, k) => (
                  <RailCell key={k} rail={r} sign={k === n.rails.length - 1 ? n.sign : undefined} />
                ))}
                <a href="#node" className="flex items-center gap-1 pl-px leading-4 whitespace-nowrap">
                  <TreeIcon name={n.icon} />
                  <span className="flex">
                    {n.num && <span className="w-[18px]">{n.num}</span>}
                    {n.text}
                  </span>
                </a>
              </li>
            ))}
          </ul>
        </aside>

        <main className="ml-[5px] flex min-w-0 flex-1 flex-col border-t border-r border-[#8c8e96]">
          <TabStrip />
          <div className={`flex h-[28px] shrink-0 items-center border-b border-[#6f9bdc] pr-[9px] pl-[5px] ${barGradient}`}>
            <button className="flex items-center gap-1 text-[#1e4896]">
              <LayoutIcon />
              保存外观
              <Caret className="mx-2 h-[3px] w-[6px]" />
            </button>
            <button className="text-[#1e4896]">高拍仪拍照</button>
            <div className="ml-auto flex items-center gap-[11px]">
              <ToolButton icon={<PlusIcon />} text="新增自提出库" />
              <ToolButton icon={<SearchIcon />} text="查询(S)" />
              <ToolButton icon={<ExcelIcon />} text="导出" />
              <ToolButton icon={<PrinterIcon />} text="打印(P)" />
              <ToolButton icon={<CrossIcon />} text="删除已上传文件" />
            </div>
          </div>
          <Filters />
          <MainGrid />
        </main>
      </div>

      <footer className="flex h-8 shrink-0 items-center gap-[7px] bg-[#ffa500] pt-px pl-1 whitespace-nowrap">
        <span>当前登录用户：</span>
        <span className="pl-1">VCAVEMAN(***未设置***)</span>
        <span>所在网点：</span>
        <span>深圳总部</span>
        <span>网络延迟</span>
        <span className="text-[#1f8f1f]">4ms</span>
        <div className="ml-1 flex gap-3 text-[19px] font-bold text-[#32cd32]">
          <span>1.DB</span>
          <span>2.API</span>
          <span>3.API&gt;配置DB</span>
          <span>4.API&gt;应用DB</span>
        </div>
      </footer>
      <div className="flex h-2 shrink-0 overflow-hidden bg-[#222222] text-white">
        <span className="w-[568px] bg-[#021a24]" />
        <span className="w-[111px]" />
        <span className="w-[160px] bg-[#555555]" />
        <span className="mt-px ml-auto">19:38:53 星期</span>
        <span className="ml-[63px] w-[34px] bg-[#050a20]" />
      </div>

      <DialogWindow />

      <div className="absolute right-[2px] bottom-2 flex w-[248px] flex-col gap-[2px]">
        <Notice verb="有更改" place="更新" />
        <Notice verb="已确认" place="安排" />
      </div>

      <div className="absolute top-[412px] right-0 flex h-[59px] w-[10px] flex-col justify-center gap-px rounded-l bg-[#3d4250] pl-1">
        {Array.from({ length: 23 }, (_, i) => (
          <span key={i} className={i > 15 ? "h-px w-[5px] bg-[#6fd6a8]" : "h-px w-[5px] bg-[#22262f]"} />
        ))}
      </div>

      <Annotations />
    </div>
  );
}
